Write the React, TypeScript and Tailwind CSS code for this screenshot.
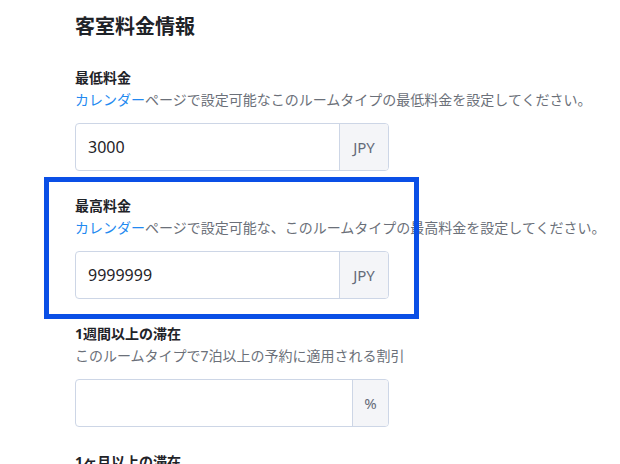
import React from "react";

const font = {
  fontFamily:
    '"Noto Sans", "Noto Sans CJK JP", "Noto Sans CJK SC", sans-serif',
};

type FieldProps = {
  label: string;
  desc?: React.ReactNode;
  value: string;
  addon: string;
  addonW: string;
};

function Field({ label, desc, value, addon, addonW }: FieldProps) {
  return (
    <div className="mb-[24px]">
      <div className="text-[14px] leading-[22px] font-bold text-[#1f2328]">{label}</div>
      {desc ? (
        <div className="text-[14px] leading-[22px] text-[#6b7079] whitespace-nowrap">{desc}</div>
      ) : null}
      <div className="mt-[12px] flex h-[48px] w-[314px] rounded-[4px] border border-[#cdd6e6] overflow-hidden">
        <div className="flex-1 flex items-center pl-[12px] text-[16px] text-[#1f2328]">{value}</div>
        <div
          className={`${addonW} flex items-center justify-center border-l border-[#cdd6e6] bg-[#f4f5f8] text-[15px] text-[#656b78]`}
        >
          {addon}
        </div>
      </div>
    </div>
  );
}

const Cal = () => <span className="text-[#2389f0]">カレンダー</span>;

export default function App() {
  return (
    <div className="relative w-[620px] h-[464px] overflow-hidden bg-white" style={font}>
      <div className="pl-[75px] pt-[13px]">
        <h2 className="text-[20px] leading-[28px] font-bold text-[#1f2328] mb-[26px]">客室料金情報</h2>
        <Field
          label="最低料金"
          desc={<><Cal />ページで設定可能なこのルームタイプの最低料金を設定してください。</>}
          value="3000"
          addon="JPY"
          addonW="w-[49px]"
        />
        <Field
          label="最高料金"
          desc={<><Cal />ページで設定可能な、このルームタイプの最高料金を設定してください。</>}
          value="9999999"
          addon="JPY"
          addonW="w-[49px]"
        />
        <Field
          label="1週間以上の滞在"
          desc="このルームタイプで7泊以上の予約に適用される割引"
          value=""
          addon="%"
          addonW="w-[36px]"
        />
        <div className="text-[14px] leading-[22px] font-bold text-[#1f2328]">1ヶ月以上の滞在</div>
      </div>
      <div className="absolute left-[44px] top-[177px] w-[375px] h-[142px] border-[5px] border-[#0a4fe6]" />
    </div>
  );
}
